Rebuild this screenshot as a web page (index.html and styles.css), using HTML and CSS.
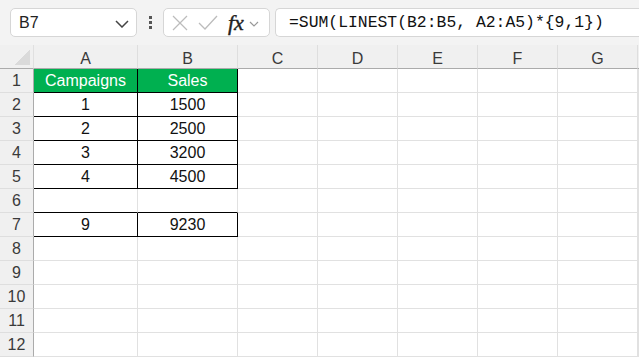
FILE: index.html
```html
<!DOCTYPE html>
<html lang="en">
  <head>
    <meta charset="UTF-8" />
    <title>LINEST forecast</title>
    <link rel="stylesheet" href="styles.css">
  </head>
  <body>
    <div class="toolbar">
      <div class="name-box">
        <span class="name-text">B7</span>
        <svg class="chevron" width="14" height="8" viewBox="0 0 14 8">
          <polyline points="1,1 7,7 13,1" fill="none" stroke="#444" stroke-width="1.5" />
        </svg>
      </div>
      <div class="dots">
        <span></span><span></span><span></span>
      </div>
      <div class="fx-box">
        <svg class="fx-icon" width="18" height="18" viewBox="0 0 18 18">
          <line x1="2" y1="2" x2="16" y2="16" stroke="#bcbcbc" stroke-width="1.3" />
          <line x1="16" y1="2" x2="2" y2="16" stroke="#bcbcbc" stroke-width="1.3" />
        </svg>
        <svg class="fx-icon" width="20" height="16" viewBox="0 0 20 16">
          <polyline points="1,8 7,14 19,1" fill="none" stroke="#bcbcbc" stroke-width="1.3" />
        </svg>
        <span class="fx-label">fx</span>
        <svg class="fx-chevron" width="10" height="6" viewBox="0 0 10 6">
          <polyline points="1,1 5,5 9,1" fill="none" stroke="#999" stroke-width="1.2" />
        </svg>
      </div>
      <div class="formula-box">=SUM(LINEST(B2:B5, A2:A5)*{9,1})</div>
    </div>

    <div class="sheet">
      <div class="cell corner"><span class="corner-mark"></span></div>
      <div class="cell col-head">A</div>
      <div class="cell col-head">B</div>
      <div class="cell col-head">C</div>
      <div class="cell col-head">D</div>
      <div class="cell col-head">E</div>
      <div class="cell col-head">F</div>
      <div class="cell col-head">G</div>
      <div class="cell col-head last"></div>

      <div class="cell row-head">1</div>
      <div class="cell boxed title">Campaigns</div>
      <div class="cell boxed title">Sales</div>
      <div class="cell"></div><div class="cell"></div><div class="cell"></div><div class="cell"></div><div class="cell"></div><div class="cell"></div>

      <div class="cell row-head">2</div>
      <div class="cell boxed">1</div>
      <div class="cell boxed">1500</div>
      <div class="cell"></div><div class="cell"></div><div class="cell"></div><div class="cell"></div><div class="cell"></div><div class="cell"></div>

      <div class="cell row-head">3</div>
      <div class="cell boxed">2</div>
      <div class="cell boxed">2500</div>
      <div class="cell"></div><div class="cell"></div><div class="cell"></div><div class="cell"></div><div class="cell"></div><div class="cell"></div>

      <div class="cell row-head">4</div>
      <div class="cell boxed">3</div>
      <div class="cell boxed">3200</div>
      <div class="cell"></div><div class="cell"></div><div class="cell"></div><div class="cell"></div><div class="cell"></div><div class="cell"></div>

      <div class="cell row-head">5</div>
      <div class="cell boxed">4</div>
      <div class="cell boxed">4500</div>
      <div class="cell"></div><div class="cell"></div><div class="cell"></div><div class="cell"></div><div class="cell"></div><div class="cell"></div>

      <div class="cell row-head">6</div>
      <div class="cell above-box"></div>
      <div class="cell above-box"></div>
      <div class="cell"></div><div class="cell"></div><div class="cell"></div><div class="cell"></div><div class="cell"></div><div class="cell"></div>

      <div class="cell row-head">7</div>
      <div class="cell boxed">9</div>
      <div class="cell boxed">9230</div>
      <div class="cell"></div><div class="cell"></div><div class="cell"></div><div class="cell"></div><div class="cell"></div><div class="cell"></div>

      <div class="cell row-head">8</div>
      <div class="cell"></div><div class="cell"></div>
      <div class="cell"></div><div class="cell"></div><div class="cell"></div><div class="cell"></div><div class="cell"></div><div class="cell"></div>

      <div class="cell row-head">9</div>
      <div class="cell"></div><div class="cell"></div>
      <div class="cell"></div><div class="cell"></div><div class="cell"></div><div class="cell"></div><div class="cell"></div><div class="cell"></div>

      <div class="cell row-head">10</div>
      <div class="cell"></div><div class="cell"></div>
      <div class="cell"></div><div class="cell"></div><div class="cell"></div><div class="cell"></div><div class="cell"></div><div class="cell"></div>

      <div class="cell row-head">11</div>
      <div class="cell"></div><div class="cell"></div>
      <div class="cell"></div><div class="cell"></div><div class="cell"></div><div class="cell"></div><div class="cell"></div><div class="cell"></div>

      <div class="cell row-head">12</div>
      <div class="cell"></div><div class="cell"></div>
      <div class="cell"></div><div class="cell"></div><div class="cell"></div><div class="cell"></div><div class="cell"></div><div class="cell"></div>
    </div>
  </body>
</html>
```

FILE: styles.css
```css
body {
  margin: 0;
  font-family: "Liberation Sans", Arial, sans-serif;
  background-color: #ffffff;
  overflow: hidden;
}

/* Formula bar */
.toolbar {
  height: 45px;
  box-sizing: border-box;
  padding: 8px 0 0 10px;
  background-color: #f3f3f3;
  display: flex;
  align-items: flex-start;
}

.name-box,
.fx-box,
.formula-box {
  height: 29px;
  box-sizing: border-box;
  background: white;
  border: 1px solid #d6d6d6;
  border-radius: 5px;
  display: flex;
  align-items: center;
}

.name-box {
  width: 127px;
  padding: 0 7px 0 8px;
  justify-content: space-between;
}

.name-text {
  font-size: 16px;
  color: #222;
}

.chevron {
  margin-top: 2px;
}

.dots {
  width: 26px;
  height: 29px;
  display: flex;
  flex-direction: column;
  align-items: center;
  justify-content: center;
  gap: 2px;
}

.dots span {
  width: 3px;
  height: 3px;
  background-color: #555;
}

.fx-box {
  width: 107px;
  padding: 0 0 0 7px;
  gap: 9px;
}

.fx-label {
  font-family: "Liberation Serif", "Times New Roman", serif;
  font-style: italic;
  font-size: 22px;
  color: #222;
  margin-left: 1px;
  line-height: 1;
  -webkit-text-stroke: 0.4px #222;
}

.fx-chevron {
  margin-left: -4px;
  margin-top: 2px;
}

.formula-box {
  flex: 1;
  margin-left: 5px;
  border-right: none;
  border-radius: 5px 0 0 5px;
  padding-left: 13px;
  font-family: "Liberation Mono", "Courier New", monospace;
  font-size: 16.4px;
  color: #111;
}

/* Grid */
.sheet {
  display: grid;
  grid-template-columns: 34px 104px 100px 80px 80px 80px 80px 80px 1fr;
  grid-auto-rows: 24px;
}

.cell {
  box-sizing: border-box;
  border-right: 1px solid #e1e1e1;
  border-bottom: 1px solid #e1e1e1;
  display: flex;
  align-items: center;
  justify-content: center;
  font-size: 16px;
  color: #111;
  padding-top: 1px;
}

.corner {
  background-color: #f0f0f0;
  border-right: 1px solid #e0e0e0;
  border-bottom: 1px solid #ababab;
  justify-content: flex-end;
  align-items: flex-end;
  padding: 0 3px 3px 0;
}

.corner-mark {
  width: 16px;
  height: 16px;
  background: linear-gradient(to bottom right, transparent 50%, #dadada 50%);
}

.col-head {
  background-color: #f0f0f0;
  border-right: 1px solid #dedede;
  border-bottom: 1px solid #ababab;
  color: #3a3a3a;
  font-size: 16px;
  padding-top: 4px;
}

.col-head.last {
  border-right: none;
}

.row-head {
  background-color: #f0f0f0;
  border-right: 1px solid #ababab;
  border-bottom: 1px solid #dedede;
  color: #3a3a3a;
  font-size: 16px;
}

.boxed {
  border-right-color: #000;
  border-bottom-color: #000;
}

.above-box {
  border-bottom-color: #000;
}

.title {
  background-color: #00b050;
  color: white;
}
```
